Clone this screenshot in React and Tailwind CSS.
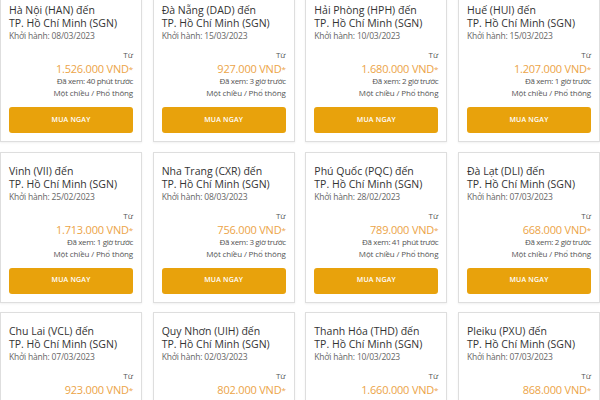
const flights = [
  { from: "Hà Nội (HAN)", date: "08/03/2023", price: "1.526.000", seen: "40 phút trước" },
  { from: "Đà Nẵng (DAD)", date: "15/03/2023", price: "927.000", seen: "3 giờ trước" },
  { from: "Hải Phòng (HPH)", date: "10/03/2023", price: "1.680.000", seen: "2 giờ trước" },
  { from: "Huế (HUI)", date: "15/03/2023", price: "1.207.000", seen: "1 giờ trước" },
  { from: "Vinh (VII)", date: "25/02/2023", price: "1.713.000", seen: "1 giờ trước" },
  { from: "Nha Trang (CXR)", date: "08/03/2023", price: "756.000", seen: "3 giờ trước" },
  { from: "Phú Quốc (PQC)", date: "28/02/2023", price: "789.000", seen: "41 phút trước" },
  { from: "Đà Lạt (DLI)", date: "07/03/2023", price: "668.000", seen: "2 giờ trước" },
  { from: "Chu Lai (VCL)", date: "07/03/2023", price: "923.000", seen: "2 giờ trước" },
  { from: "Quy Nhơn (UIH)", date: "02/03/2023", price: "802.000", seen: "1 giờ trước" },
  { from: "Thanh Hóa (THD)", date: "10/03/2023", price: "1.660.000", seen: "3 giờ trước" },
  { from: "Pleiku (PXU)", date: "07/03/2023", price: "868.000", seen: "1 giờ trước" },
];

function FlightCard({ flight }) {
  return (
    <div className="flex flex-col border border-[#dedede] bg-white px-[8px] pt-[12px] pb-[8px] shadow-[0_1px_2px_rgba(0,0,0,0.06)]">
      {/* route */}
      <div className="text-[10.5px] leading-[13px] text-[#333]">
        <div>{flight.from} đến</div>
        <div>TP. Hồ Chí Minh (SGN)</div>
      </div>
      <div className="mt-[1px] text-[8.5px] leading-[10px] text-[#666] tracking-[-0.2px]">
        Khởi hành: {flight.date}
      </div>

      {/* price */}
      <div className="mt-[9px] flex flex-col items-end text-right">
        <div className="text-[8px] leading-[10px] text-[#555]">Từ</div>
        <div className="mt-[2px] text-[11px] leading-[13px] text-[#eca447] tracking-[-0.2px]">
          {flight.price} VND<span className="align-top text-[8px]">*</span>
        </div>
        <div className="text-[8px] leading-[12px] text-[#555] tracking-[-0.35px]">
          Đã xem: {flight.seen}
        </div>
        <div className="text-[8px] leading-[12px] text-[#555] tracking-[-0.15px]">
          Một chiều / Phổ thông
        </div>
      </div>

      <button className="mt-[8px] h-[26px] w-full rounded-[3px] bg-[#e8a20c] text-[7px] font-semibold tracking-[0.2px] text-white">
        MUA NGAY
      </button>
    </div>
  );
}

export default function App() {
  return (
    <div
      className="h-[400px] w-[600px] overflow-hidden bg-white"
      style={{ fontFamily: '"Open Sans", "Noto Sans", sans-serif' }}
    >
      <div className="mt-[-9px] grid grid-cols-4 gap-x-[10.67px] gap-y-[9.5px]">
        {flights.map((f) => (
          <FlightCard key={f.from} flight={f} />
        ))}
      </div>
    </div>
  );
}
